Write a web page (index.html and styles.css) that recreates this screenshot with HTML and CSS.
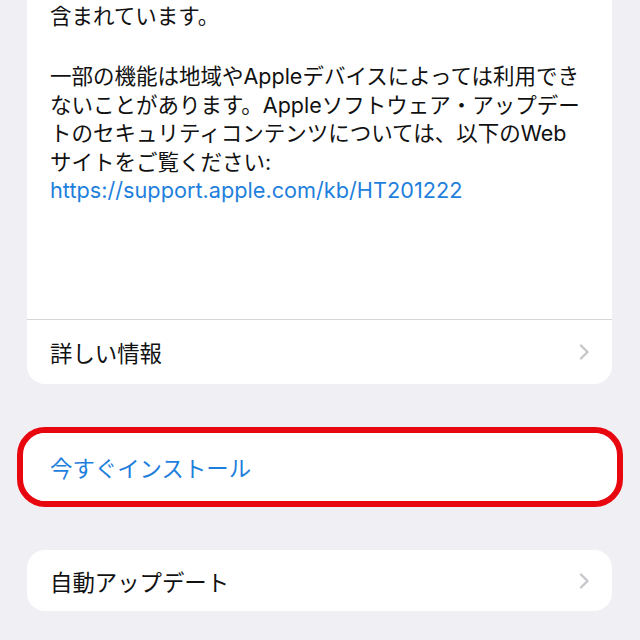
FILE: index.html
```html
<!DOCTYPE html>
<html lang="ja">
<head>
    <meta charset="UTF-8">
    <meta name="viewport" content="width=device-width, initial-scale=1.0">
    <title>ソフトウェア・アップデート</title>
    <link rel="stylesheet" href="styles.css">
</head>
<body>
    <div class="page">
        <div class="card notes">
            <div class="notes-body">
                <p>含まれています。</p>
                <p>一部の機能は地域やAppleデバイスによっては利用でき<br>ないことがあります。Appleソフトウェア・アップデー<br>トのセキュリティコンテンツについては、以下のWeb<br>サイトをご覧ください:<br>
                <a href="#" class="link">https://support.apple.com/kb/HT201222</a></p>
            </div>
            <div class="row">
                <span>詳しい情報</span>
                <svg class="chevron" width="10" height="16" viewBox="0 0 10 16"><path d="M2 1.5l6.5 6.5-6.5 6.5" fill="none" stroke="currentColor" stroke-width="2.4" stroke-linecap="round" stroke-linejoin="round"/></svg>
            </div>
        </div>

        <div class="highlight">
            <div class="card">
                <div class="row row-install">
                    <span class="action">今すぐインストール</span>
                </div>
            </div>
        </div>

        <div class="card auto">
            <div class="row">
                <span>自動アップデート</span>
                <svg class="chevron" width="10" height="16" viewBox="0 0 10 16"><path d="M2 1.5l6.5 6.5-6.5 6.5" fill="none" stroke="currentColor" stroke-width="2.4" stroke-linecap="round" stroke-linejoin="round"/></svg>
            </div>
        </div>
    </div>
</body>
</html>
```

FILE: styles.css
```css
body {
    font-family: Inter, "Noto Sans CJK JP", sans-serif;
    margin: 0;
    background-color: #efeff4;
    color: #111;
    font-size: 22.4px;
}

.page {
    padding: 0 28px 0 27px;
    height: 640px;
    box-sizing: border-box;
    overflow: hidden;
}

.card {
    background: white;
    border-radius: 18px;
}

.notes {
    border-top-left-radius: 0;
    border-top-right-radius: 0;
}

.notes-body {
    height: 320px;
    padding: 2px 12px 0 23px;
    box-sizing: border-box;
    border-bottom: 1px solid #d6d6da;
    font-size: 21.5px;
    line-height: 28.5px;
    white-space: nowrap;
}

.notes-body p {
    margin: 0 0 31.5px;
}

.link {
    color: #1f7fdd;
    text-decoration: none;
    font-size: 21.7px;
}

.row {
    height: 64px;
    display: flex;
    align-items: center;
    justify-content: space-between;
    padding: 0 23px 0 23px;
}

.chevron {
    color: #c7c7cc;
}

.highlight {
    margin: 43px -11px 0 -10px;
    border: 6px solid #e8060f;
    border-radius: 28px;
    background: white;
}

.highlight .card {
    margin: 0 5px 0 4px;
}

.row-install {
    height: 68px;
}

.action {
    color: #1f7fdd;
}

.auto {
    margin-top: 43px;
}

.auto .row {
    height: 61px;
}
```
